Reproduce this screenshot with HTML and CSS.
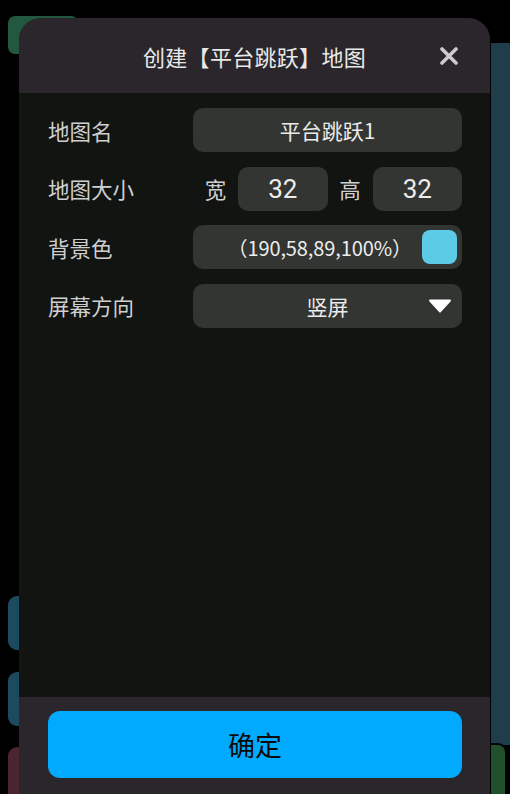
FILE: index.html
```html
<!DOCTYPE html>
<html lang="zh">
<head>
<meta charset="utf-8">
<title>创建地图</title>
<link rel="stylesheet" href="styles.css">
</head>
<body>
<div class="backdrop">
  <div class="deco deco-green-top"></div>
  <div class="deco deco-blue-right"></div>
  <div class="deco deco-green-bottom"></div>
  <div class="deco deco-blue-left1"></div>
  <div class="deco deco-blue-left2"></div>
  <div class="deco deco-red-left"></div>
</div>
<div class="dialog">
  <div class="dialog-header">
    <div class="dialog-title">创建【平台跳跃】地图</div>
    <svg class="close" viewBox="0 0 18 18" width="18" height="18">
      <path d="M2 2 L16 16 M16 2 L2 16" stroke="#cbcbcb" stroke-width="3.6" stroke-linecap="round"/>
    </svg>
  </div>
  <div class="dialog-body">
    <div class="row">
      <div class="label">地图名</div>
      <div class="field">平台跳跃1</div>
    </div>
    <div class="row">
      <div class="label">地图大小</div>
      <div class="size-grid">
        <div class="sub-label">宽</div>
        <div class="field num">32</div>
        <div class="sub-label">高</div>
        <div class="field num">32</div>
      </div>
    </div>
    <div class="row">
      <div class="label">背景色</div>
      <div class="field color-field">
        <span class="color-text">（190,58,89,100%）</span>
        <span class="swatch"></span>
      </div>
    </div>
    <div class="row">
      <div class="label">屏幕方向</div>
      <div class="field select-field">
        <span>竖屏</span>
        <svg class="caret" viewBox="0 0 24 14" width="24" height="14">
          <path d="M2 1.5 L22 1.5 L12 12.5 Z" fill="#ffffff" stroke="#ffffff" stroke-width="2" stroke-linejoin="round"/>
        </svg>
      </div>
    </div>
  </div>
  <div class="dialog-footer">
    <div class="confirm">确定</div>
  </div>
</div>
</body>
</html>
```

FILE: styles.css
```css
html, body {
  margin: 0;
  padding: 0;
  background: #000;
  width: 510px;
  height: 794px;
  overflow: hidden;
  font-family: "Noto Sans CJK SC", "Noto Sans", sans-serif;
}

.backdrop {
  position: absolute;
  inset: 0;
}

.deco {
  position: absolute;
}

.deco-green-top {
  left: 8px;
  top: 16px;
  width: 70px;
  height: 38px;
  background: #22583f;
  border-radius: 7px;
}

.deco-blue-right {
  left: 491px;
  top: 43px;
  width: 30px;
  height: 702px;
  background: #1f3d4b;
}

.deco-green-bottom {
  left: 489px;
  top: 743px;
  width: 14px;
  height: 60px;
  background: #21502c;
  border: 2px solid #000;
  border-radius: 0 9px 0 0;
}

.deco-blue-left1 {
  left: 8px;
  top: 596px;
  width: 30px;
  height: 54px;
  background: #1d4a5e;
  border-radius: 9px;
}

.deco-blue-left2 {
  left: 8px;
  top: 672px;
  width: 30px;
  height: 54px;
  background: #1d4a5e;
  border-radius: 9px;
}

.deco-red-left {
  left: 8px;
  top: 747px;
  width: 30px;
  height: 60px;
  background: #4a2530;
  border-radius: 9px;
}

.dialog {
  position: relative;
  margin: 18px 0 0 19px;
  width: 471px;
  height: 800px;
  border-radius: 22px 22px 0 0;
  overflow: hidden;
  display: flex;
  flex-direction: column;
  background: #2b262b;
}

.dialog-header {
  height: 75px;
  flex: none;
  background: #2a262b;
  display: flex;
  align-items: center;
  justify-content: center;
  position: relative;
}

.dialog-title {
  color: #e8e8e8;
  font-size: 22px;
  letter-spacing: 0.3px;
  margin-top: 1px;
}

.close {
  position: absolute;
  right: 32px;
  top: 29px;
}

.dialog-body {
  height: 604px;
  flex: none;
  background: #111411;
  padding: 15px 28px 0 29px;
  box-sizing: border-box;
  display: flex;
  flex-direction: column;
  gap: 14.5px;
}

.row {
  display: flex;
  align-items: center;
  height: 44px;
}

.label {
  width: 145px;
  flex: none;
  color: #cfcfcf;
  font-size: 21.5px;
}

.field {
  flex: 1;
  height: 44px;
  background: #333532;
  border-radius: 10px;
  display: flex;
  align-items: center;
  justify-content: center;
  color: #ececec;
  font-size: 21px;
}

.size-grid {
  flex: 1;
  display: grid;
  grid-template-columns: 45px 1fr 45px 1fr;
  align-items: center;
  height: 44px;
}

.sub-label {
  color: #cfcfcf;
  font-size: 21.5px;
  text-align: center;
}

.num {
  font-family: Roboto, "Noto Sans", sans-serif;
  font-size: 26px;
}

.color-field {
  justify-content: flex-end;
  padding-right: 5px;
  gap: 10px;
}

.color-text {
  font-size: 20px;
  font-family: "Noto Sans CJK SC", Roboto, sans-serif;
  letter-spacing: -0.1px;
}

.swatch {
  width: 35px;
  height: 34px;
  background: #5bcbe6;
  border-radius: 8px;
}

.select-field {
  position: relative;
}

.caret {
  position: absolute;
  right: 10px;
  top: 15px;
}

.dialog-footer {
  flex: 1;
  background: #2b262b;
  padding: 14px 28px 0 29px;
}

.confirm {
  height: 67px;
  background: #00aaff;
  border-radius: 12px;
  display: flex;
  align-items: center;
  justify-content: center;
  color: #0a0a0a;
  font-size: 27px;
}
```
